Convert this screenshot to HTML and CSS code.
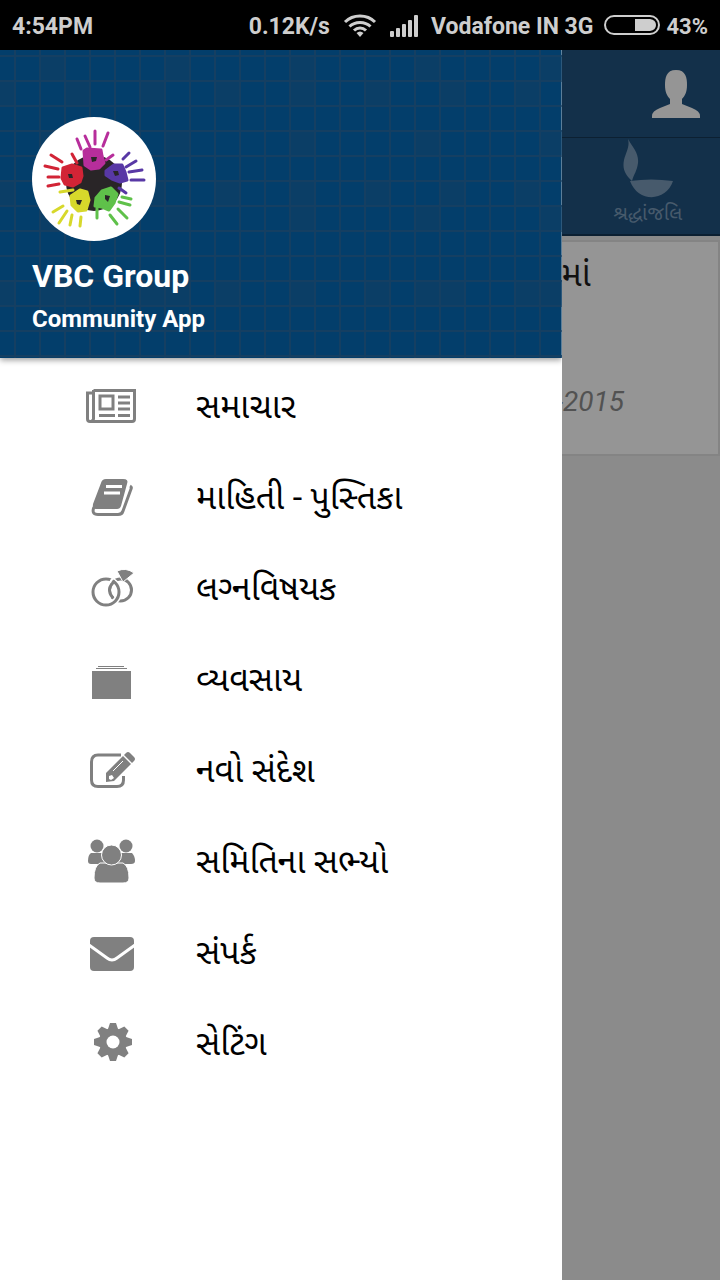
FILE: index.html
```html
<!DOCTYPE html>
<html lang="gu">
<head>
<meta charset="utf-8">
<meta name="viewport" content="width=device-width, initial-scale=1">
<title>VBC Group</title>
<link rel="stylesheet" href="styles.css">
</head>
<body>
<header class="status">
  <span class="clock">4:54PM</span>
  <span>0.12K/s</span>
  <svg class="wifi" width="34" height="24" viewBox="0 0 34 24" fill="none" stroke="#cecece" stroke-width="3"><path d="M2 8C10 0 24 0 32 8M6.500 12.500C12 7 22 7 27.500 12.500M11 16.500C14.500 13 19.500 13 23 16.500"/><path d="M13.500 19L17 23L20.500 19Q17 16 13.500 19Z" fill="#cecece" stroke="none"/></svg>
  <svg class="signal" width="28" height="22" viewBox="0 0 28 22" fill="#cecece"><rect y="16" width="4" height="6" rx="1"/><rect x="6" y="13" width="4" height="9" rx="1"/><rect x="12" y="9" width="4" height="13" rx="1"/><rect x="18" y="5" width="4" height="17" rx="1"/><rect x="24" width="4" height="22" rx="1"/></svg>
  <span>Vodafone IN 3G</span>
  <svg class="battery" width="56" height="20" viewBox="0 0 56 20"><rect x="1" y="1" width="54" height="18" rx="9" fill="none" stroke="#cecece" stroke-width="2"/><path d="M31 4H46Q52 5 52 10T46 16H31Z" fill="#cecece"/></svg>
  <span class="charge">43%</span>
</header>
<div class="screen">
  <aside class="drawer">
    <div class="profile">
      <svg class="avatar" viewBox="0 0 124 124" role="img" aria-label="VBC Group">
        <circle cx="62" cy="62" r="62" fill="#fff"/>
        <circle cx="62" cy="66" r="28" fill="#292527"/>
        <g stroke-linecap="round" stroke-linejoin="round" stroke-width="3" fill="none">
          <g stroke="#b72e9b"><path d="M52 34L55 32L69 33L70 39L72 46L67 51L59 52L53 48Z" fill="#b72e9b"/><path d="M45 22L49 32M53 19L58 30M63 14V27M76 16L71 29M81 38L74 43"/></g>
          <g stroke="#5838a5"><path d="M74 54L82 48L90 48L93 55L95 63L88 65L80 62L74 58Z" fill="#5838a5"/><path d="M97 36L91 42M104 44L94 50M110 53L97 55M112 63H99M94 76L87 71"/></g>
          <g stroke="#d22436"><path d="M31 51L40 48L49 51L50 59L48 65L41 69L33 67L30 61Z" fill="#d22436"/><path d="M19 38L30 45M13 49L26 52M16 60L27 60M16 69L27 67M40 37L45 46"/></g>
          <g stroke="#d7d82b"><path d="M39 79L48 73L55 75L57 83L54 93L46 94L40 88Z" fill="#d7d82b"/><path d="M28 75L41 73M31 89L21 95M35 94L27 106M40 98L38 108M49 100L48 109"/></g>
          <g stroke="#5fc14a"><path d="M64 81L70 74L79 71L85 77L82 86L77 93L70 90L63 89Z" fill="#5fc14a"/><path d="M65 91V101M78 98L85 107M86 92L95 101M87 85L98 88M90 80L99 82"/></g>
        </g>
        <g fill="#292527"><path d="M59 40L65 40L64 44L60 45Z"/><path d="M81 54L86 54L87 58L83 59Z"/><path d="M36 57L40 57L41 61L37 61Z"/><path d="M44 83L50 83L48 88L45 87Z"/><path d="M73 78L78 79L76 85L73 82Z"/></g>
      </svg>
      <h1 class="name">VBC Group</h1>
      <p class="tagline">Community App</p>
    </div>
    <nav class="menu">
      <a class="item" href="#news"><svg class="icon" viewBox="0 0 52 48" fill="none" stroke="#808080" stroke-width="3"><path d="M7.500 8.500H48.500V37Q48.500 39.500 46 39.500H4Q1.500 39.500 1.500 37V11H8M7.500 8V37Q7 39 5 39"/><rect x="14" y="14" width="13" height="13"/><path d="M32 15H44M32 21H44M32 27H44M13 33.500H29M32 33.500H44"/></svg><span>સમાચાર</span></a>
      <a class="item" href="#directory"><svg class="icon" viewBox="0 0 52 48"><path fill="#808080" d="M20 6H37Q43 6 41 11L35 33Q34 36 31 36H10Q6 36 7 31L15 10Q16 6 20 6Z"/><path d="M20 13.500H36M18 20H34" stroke="#fff" stroke-width="3"/><path d="M8 34Q5 41.500 12 41.500H32Q36 41.500 37 38L45 16Q46 14 44 13" stroke="#808080" stroke-width="3" fill="none"/></svg><span>માહિતી - પુસ્તિકા</span></a>
      <a class="item" href="#matrimony"><svg class="icon" viewBox="0 0 52 48"><g fill="none" stroke="#808080" stroke-width="3"><circle cx="34.500" cy="26" r="11"/><circle cx="20" cy="28" r="13" stroke="#fff" stroke-width="6"/><circle cx="20" cy="28" r="13"/><path d="M27 14Q18 25 25 34" stroke="#fff" stroke-width="2"/><path d="M29 17Q19 25 27 34"/></g><path d="M31 7Q40 3 48 9L37 18Z" fill="#808080" stroke="#fff"/></svg><span>લગ્‍નવિષયક</span></a>
      <a class="item" href="#business"><svg class="icon" viewBox="0 0 52 48" fill="#808080"><rect x="6" y="16" width="39" height="28"/><rect x="10" y="13" width="31" height="1"/><rect x="12" y="11" width="26" height="1"/></svg><span>વ્યવસાય</span></a>
      <a class="item" href="#compose"><svg class="icon" viewBox="0 0 52 48" fill="none" stroke="#808080" stroke-width="3"><path d="M35 9H12Q5.500 9 5.500 16V34Q5.500 40.500 12 40.500H31Q37.500 40.500 37.500 34V30"/><path d="M20 27L37 10L45 18L28 35L20 36Z" fill="#808080" stroke="none"/><path d="M38 9L40 7Q42 5 44 7L48 11Q50 13 48 15L46 17Z" fill="#808080" stroke="none"/><path d="M23 30L26 29L28 32L25 34L23 33Z" fill="#fff" stroke="none"/><path d="M27 25L37 15" stroke="#fff" stroke-width="1"/></svg><span>નવો સંદેશ</span></a>
      <a class="item" href="#committee"><svg class="icon" viewBox="0 0 52 48" fill="#808080"><circle cx="11" cy="9" r="6.500"/><circle cx="40" cy="9" r="6.500"/><path d="M5 16H21V27H5Q2 27 2 24Q2 18 5 16ZM30 16H46Q49 19 49 24Q49 27 45 27H30Z"/><path d="M14 26H37Q43 29 43 41Q43 46 37 46H14Q8 46 8 41Q8 29 14 26Z" stroke="#fff"/><circle cx="25.500" cy="18" r="10" stroke="#fff"/></svg><span>સમિતિના સભ્યો</span></a>
      <a class="item" href="#contact"><svg class="icon" viewBox="0 0 52 48"><rect x="4" y="9" width="44" height="34" rx="4" fill="#808080"/><path d="M3 17L21 30Q26 34 31 30L49 17" fill="none" stroke="#fff" stroke-width="3"/></svg><span>સંપર્ક</span></a>
      <a class="item" href="#settings"><svg class="icon" viewBox="0 0 52 48"><g fill="#808080" transform="translate(27 23)"><circle r="14"/><g id="teeth"><path id="tooth" d="M-5 -13L-3 -19H3L5 -13V13L3 19H-3L-5 13Z"/><use href="#tooth" transform="rotate(45)"/></g><use href="#teeth" transform="rotate(90)"/><circle r="6.500" fill="#fff"/></g></svg><span>સેટિંગ</span></a>
    </nav>
  </aside>
  <main class="page">
    <div class="appbar"><button class="account" type="button" aria-label="Account"><svg width="48" height="50" viewBox="0 0 48 50" fill="#959595"><path d="M24 1C34 1 35 9 35 16C35 23 33 27 30 30V35L40 39Q48 42 48 47V49H0V47Q0 42 8 39L18 35V30C15 27 13 23 13 16C13 9 14 1 24 1Z"/></svg></button></div>
    <a class="tab" href="#tribute"><svg width="50" height="60" viewBox="0 0 50 60" fill="#475a6c"><path d="M5 0C10 9 16 14 15 24C14 32 11 35 9 42C3 36-1 31 1 21C3 13 7 8 5 0Z"/><path d="M7 42Q28 39 50 42C43 63 15 64 7 42Z"/></svg><span>શ્રદ્ધાંજલિ</span></a>
    <article class="card"><h2 class="headline">માં</h2><time class="date">-2015</time></article>
  </main>
</div>
</body>
</html>
```
FILE: styles.css
```css
* { box-sizing: border-box; }
body { margin: 0; min-height: 100vh; display: flex; flex-direction: column; background: #8b8b8b; font-family: Roboto, "Noto Sans", "Noto Sans Gujarati", sans-serif; }
.status { height: 50px; padding: 2px 12px 0; display: flex; align-items: center; background: #000; color: #cecece; font-size: 23px; font-weight: 700; white-space: nowrap; }
.clock { margin-right: auto; }
.wifi { margin: 0 13px; }
.signal { margin-right: 13px; }
.battery { margin: 0 6px 2px 11px; }
.charge { font-size: 22px; }
.screen { flex: 1; display: grid; grid-template-columns: 78fr 22fr; }
.drawer { min-width: 0; background: #fff; }
.profile {
  height: 308px;
  padding: 67px 32px 0;
  color: #fff;
  background-color: #033e6b;
  background-image:
    linear-gradient(#153f62 2px, transparent 2px),
    linear-gradient(90deg, #153f62 2px, transparent 2px),
    conic-gradient(at 25px 25px, transparent 75%, #0b3e66 0),
    conic-gradient(at 25px 25px, transparent 75%, #0b3e66 0);
  background-size: 25px 25px, 25px 25px, 75px 100px, 125px 75px;
  background-position: 14px 5px, 14px 5px, 64px 30px, 39px 5px;
  box-shadow: 0 2px 6px #0006;
  clip-path: inset(0 0 -10px 0);
}
.avatar { display: block; width: 124px; height: 124px; }
.name { margin: 15px 0 0; font-size: 32px; line-height: 40px; font-weight: 700; }
.tagline { margin: 9px 0 0; font-size: 24px; line-height: 28px; font-weight: 700; }
.menu { padding-top: 2px; }
.item { display: flex; align-items: center; gap: 58px; min-height: 91px; padding-left: 86px; color: #000; font-size: 34px; line-height: 44px; text-decoration: none; }
.icon { width: 52px; height: 48px; flex: none; }
.page { min-width: 0; background: #8b8b8b; }
.appbar { height: 88px; display: flex; justify-content: flex-end; align-items: center; padding-right: 20px; background: #13304a; border-bottom: 1px solid #0c2032; }
.account { padding: 0; border: 0; background: none; }
.account svg { display: block; }
.tab { height: 98px; display: flex; flex-direction: column; align-items: center; padding: 1px 0 0 14px; background: #13304a; border-bottom: 2px solid #0c2032; color: #475a6c; font-size: 20px; line-height: 28px; text-decoration: none; }
.tab svg { flex: none; }
.card { height: 216px; margin: 4px 0 0; border: solid #848484; border-width: 2px 2px 2px 0; background: #959595; overflow: hidden; }
.headline { margin: 10px 0 0; font-size: 34px; line-height: 44px; font-weight: 400; color: #111; }
.date { display: block; margin: 89px 0 0 -6px; font-size: 28px; line-height: 34px; font-style: italic; color: #525252; }
```
